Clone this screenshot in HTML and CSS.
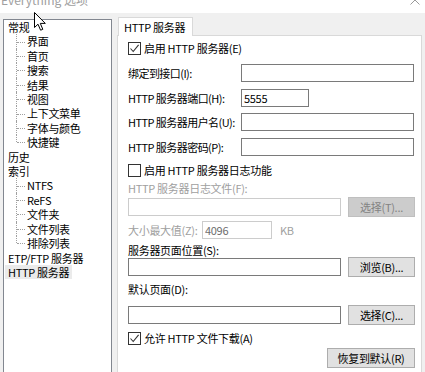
FILE: index.html
```html
<!DOCTYPE html>
<html lang="zh-CN">
<head>
    <meta charset="UTF-8">
    <meta name="viewport" content="width=device-width, initial-scale=1.0">
    <title>Everything 选项</title>
    <link rel="stylesheet" href="styles.css">
</head>
<body>
    <div class="titlebar">
        <span class="title">Everything 选项</span>
        <svg class="close" width="10" height="10" viewBox="0 0 10 10">
            <path d="M0.5 0.5L9.5 9.5M9.5 0.5L0.5 9.5" stroke="#9a9a9a" fill="none"/>
        </svg>
    </div>

    <div class="dialog">
        <!-- left side: page tree -->
        <ul class="tree">
            <li class="node">常规
                <ul class="children">
                    <li>界面</li>
                    <li>首页</li>
                    <li>搜索</li>
                    <li>结果</li>
                    <li>视图</li>
                    <li>上下文菜单</li>
                    <li>字体与颜色</li>
                    <li>快捷键</li>
                </ul>
            </li>
            <li class="node">历史</li>
            <li class="node">索引
                <ul class="children">
                    <li>NTFS</li>
                    <li>ReFS</li>
                    <li>文件夹</li>
                    <li>文件列表</li>
                    <li>排除列表</li>
                </ul>
            </li>
            <li class="node">ETP/FTP 服务器</li>
            <li class="node"><span class="selected">HTTP 服务器</span></li>
        </ul>

        <!-- right side: tab page -->
        <div class="tabs">
            <div class="tab-strip">
                <div class="tab">HTTP 服务器</div>
            </div>
            <div class="tab-panel">
                <label class="check-row">
                    <span class="checkbox checked"></span>启用 HTTP 服务器(E)
                </label>

                <div class="field-row mt9">
                    <span class="field-label">绑定到接口(I):</span>
                    <input class="text-input" type="text">
                </div>
                <div class="field-row mt7">
                    <span class="field-label">HTTP 服务器端口(H):</span>
                    <input class="text-input port" type="text" value="5555">
                </div>
                <div class="field-row mt6">
                    <span class="field-label">HTTP 服务器用户名(U):</span>
                    <input class="text-input" type="text">
                </div>
                <div class="field-row mt7">
                    <span class="field-label">HTTP 服务器密码(P):</span>
                    <input class="text-input" type="password">
                </div>

                <label class="check-row mt7">
                    <span class="checkbox"></span>启用 HTTP 服务器日志功能
                </label>

                <div class="label-row disabled mt4">HTTP 服务器日志文件(F):</div>
                <div class="browse-row mt2">
                    <input class="text-input" type="text" disabled>
                    <button class="btn" type="button" disabled>选择(T)...</button>
                </div>
                <div class="field-row mt4">
                    <span class="size-label disabled">大小最大值(Z):</span>
                    <input class="text-input size" type="text" value="4096" disabled>
                    <span class="unit disabled">KB</span>
                </div>

                <div class="label-row mt4">服务器页面位置(S):</div>
                <div class="browse-row">
                    <input class="text-input" type="text">
                    <button class="btn" type="button">浏览(B)...</button>
                </div>

                <div class="label-row mt5">默认页面(D):</div>
                <div class="browse-row mt9">
                    <input class="text-input" type="text">
                    <button class="btn" type="button">选择(C)...</button>
                </div>

                <label class="check-row mt6">
                    <span class="checkbox checked"></span>允许 HTTP 文件下载(A)
                </label>

                <div class="actions mt3">
                    <button class="btn restore" type="button">恢复到默认(R)</button>
                </div>
            </div>
        </div>
    </div>

    <!-- mouse pointer caught in the screenshot -->
    <svg class="cursor" width="13" height="19" viewBox="0 0 13 19">
        <path d="M0.5 0.5L0.5 15.5L4 12.2L6.6 18.2L8.8 17.3L6.3 11.4L11.3 11.4Z" fill="#fff" stroke="#000" stroke-linejoin="round"/>
    </svg>
</body>
</html>
```

FILE: styles.css
```css
body {
    margin: 0;
    height: 372px;
    overflow: hidden;
    position: relative;
    background: #f0f0f0;
    color: #000;
    font-family: "Noto Sans CJK SC", "Noto Sans", sans-serif;
    font-size: 11px;
    line-height: 14px;
    letter-spacing: -0.3px;
}
ul {
    list-style: none;
    margin: 0;
    padding: 0;
}

/* title bar, cut off at the top */
.titlebar {
    height: 13px;
    background: #fff;
    display: flex;
    justify-content: space-between;
    overflow: hidden;
}
.title {
    color: #a0a0a0;
    font-size: 12px;
    line-height: 12px;
    margin-top: -6px;
    padding-left: 1px;
    letter-spacing: 0;
}
.close {
    margin-top: -5px;
    margin-right: 5px;
}

.dialog {
    display: flex;
    gap: 5px;
    padding: 0 3px;
    height: 380px;
}

/* tree */
.tree {
    width: 108px;
    margin-top: 6px;
    padding: 0 0 0 4px;
    border: 1px solid #828790;
    background: #fff;
    line-height: 14.4px;
    white-space: nowrap;
}
.children {
    margin-left: 8px;
}
.children li {
    position: relative;
    padding-left: 11px;
}
.children li::before {
    content: "";
    position: absolute;
    left: 0;
    top: 0;
    bottom: 0;
    border-left: 1px dotted #a0a0a0;
}
.children li:last-child::before {
    bottom: 50%;
}
.children li::after {
    content: "";
    position: absolute;
    left: 1px;
    top: 50%;
    width: 8px;
    border-top: 1px dotted #a0a0a0;
}
.selected {
    display: inline-block;
    margin-left: -3px;
    padding: 0 3px;
    background: #ebebeb;
}

/* tab control */
.tabs {
    flex: 1;
    display: flex;
    flex-direction: column;
}
.tab-strip {
    display: flex;
    padding: 4px 0 0 1px;
}
.tab {
    position: relative;
    height: 18px;
    line-height: 18px;
    padding: 0 7px 0 5px;
    margin-bottom: -1px;
    border: 1px solid #d9d9d9;
    border-bottom: none;
    background: #fff;
}
.tab-panel {
    flex: 1;
    display: flex;
    flex-direction: column;
    padding: 5px 6px 0 10px;
    border: 1px solid #d9d9d9;
    background: #fff;
    white-space: nowrap;
}

.check-row {
    display: flex;
    align-items: center;
    height: 14px;
}
.checkbox {
    flex-shrink: 0;
    width: 11px;
    height: 11px;
    margin-right: 3px;
    border: 1px solid #333;
    background: #fff center / 11px 11px no-repeat;
}
.checkbox.checked {
    background-image: url("data:image/svg+xml,%3Csvg xmlns='http://www.w3.org/2000/svg' width='11' height='11'%3E%3Cpath d='M1.5 5.5L4.2 8.5L9.6 1.8' fill='none' stroke='%23333' stroke-width='1.1'/%3E%3C/svg%3E");
}

.field-row {
    display: flex;
    align-items: center;
    height: 18px;
}
.field-label {
    flex-shrink: 0;
    width: 113px;
    letter-spacing: -0.55px;
}
.label-row {
    height: 14px;
}
.browse-row {
    display: flex;
    align-items: center;
    gap: 7px;
    height: 20px;
}
.browse-row .text-input {
    width: 213px;
}
.disabled {
    color: #a0a0a0;
}

.text-input {
    flex-shrink: 0;
    box-sizing: border-box;
    width: 173px;
    height: 18px;
    margin: 0;
    padding: 0 2px;
    border: 1px solid #7a7a7a;
    background: #fff;
    font: inherit;
    letter-spacing: inherit;
    color: #000;
    outline: none;
}
.text-input:disabled {
    border-color: #cccccc;
    color: #6d6d6d;
}
.text-input.port {
    width: 68px;
}
.size-label {
    flex-shrink: 0;
    width: 74px;
}
.text-input.size {
    width: 70px;
}
.unit {
    margin-left: 8px;
}

.btn {
    flex-shrink: 0;
    box-sizing: border-box;
    width: 67px;
    height: 20px;
    margin: 0;
    padding: 0;
    border: 1px solid #adadad;
    background: #e1e1e1;
    font: inherit;
    letter-spacing: inherit;
    color: #000;
}
.btn:disabled {
    border-color: #bfbfbf;
    background: #cccccc;
    color: #838383;
}
.actions {
    display: flex;
    justify-content: flex-end;
}
.btn.restore {
    width: 88px;
}

.mt2 { margin-top: 2px; }
.mt3 { margin-top: 3px; }
.mt4 { margin-top: 4px; }
.mt5 { margin-top: 5px; }
.mt6 { margin-top: 6px; }
.mt7 { margin-top: 7px; }
.mt9 { margin-top: 9px; }

.cursor {
    position: absolute;
    left: 34px;
    top: 12px;
}
```
